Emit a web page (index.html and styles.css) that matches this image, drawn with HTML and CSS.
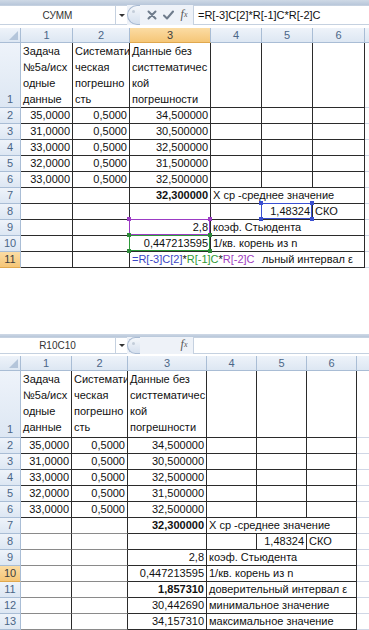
FILE: index.html
```html
<!DOCTYPE html>
<html lang="ru">
<head>
    <meta charset="UTF-8">
    <title>Задача 5а</title>
    <link rel="stylesheet" href="styles.css">
</head>
<body>
    <div class="sheet top">
        <div class="ribbon-edge"></div>
        <div class="fbar">
            <div class="namebox">СУММ</div>
            <div class="drop"><span class="tri"></span></div>
            <div class="cap"><span class="dot"></span></div>
            <div class="btn">
                <svg width="10" height="10" viewBox="0 0 10 10"><path d="M1.5 1.5 L8.5 8.5 M8.5 1.5 L1.5 8.5" stroke="#6f7c8c" stroke-width="2" stroke-linecap="round"/></svg>
            </div>
            <div class="btn">
                <svg width="11" height="10" viewBox="0 0 11 10"><path d="M1 5.5 L4 8.5 L10 1.5" fill="none" stroke="#6f7c8c" stroke-width="2" stroke-linecap="round" stroke-linejoin="round"/></svg>
            </div>
            <div class="btn fx">f<sub>x</sub></div>
            <div class="formula">=R[-3]C[2]*R[-1]C*R[-2]C</div>
        </div>

        <div class="grid grid-top">
            <div class="hd corner"><span class="corner-tri"></span></div>
            <div class="hd">1</div>
            <div class="hd">2</div>
            <div class="hd sel">3</div>
            <div class="hd">4</div>
            <div class="hd">5</div>
            <div class="hd">6</div>
            <div class="hd ex"></div>

            <div class="rh">1</div>
            <div class="c wrap">Задача<br>№5а/исх<br>одные<br>данные</div>
            <div class="c wrap">Системати<br>ческая<br>погрешно<br>сть</div>
            <div class="c wrap">Данные без<br>систтематичес<br>кой<br>погрешности</div>
            <div class="c"></div>
            <div class="c"></div>
            <div class="c"></div>
            <div class="c ex"></div>

            <div class="rh">2</div>
            <div class="c n">35,0000</div>
            <div class="c n">0,5000</div>
            <div class="c n">34,500000</div>
            <div class="c"></div><div class="c"></div><div class="c"></div>
            <div class="c ex"></div>

            <div class="rh">3</div>
            <div class="c n">31,0000</div>
            <div class="c n">0,5000</div>
            <div class="c n">30,500000</div>
            <div class="c"></div><div class="c"></div><div class="c"></div>
            <div class="c ex"></div>

            <div class="rh">4</div>
            <div class="c n">33,0000</div>
            <div class="c n">0,5000</div>
            <div class="c n">32,500000</div>
            <div class="c"></div><div class="c"></div><div class="c"></div>
            <div class="c ex"></div>

            <div class="rh">5</div>
            <div class="c n">32,0000</div>
            <div class="c n">0,5000</div>
            <div class="c n">31,500000</div>
            <div class="c"></div><div class="c"></div><div class="c"></div>
            <div class="c ex"></div>

            <div class="rh">6</div>
            <div class="c n">33,0000</div>
            <div class="c n">0,5000</div>
            <div class="c n">32,500000</div>
            <div class="c"></div><div class="c"></div><div class="c"></div>
            <div class="c ex"></div>

            <div class="rh">7</div>
            <div class="c"></div>
            <div class="c"></div>
            <div class="c n b">32,300000</div>
            <div class="c span3">Х ср -среднее значение</div>
            <div class="c ex"></div>

            <div class="rh">8</div>
            <div class="c"></div>
            <div class="c"></div>
            <div class="c"></div>
            <div class="c"></div>
            <div class="c n ov">1,48324
                <span class="ref blue"><i class="h tl"></i><i class="h tr"></i><i class="h bl"></i><i class="h br"></i></span>
            </div>
            <div class="c">СКО</div>
            <div class="c ex"></div>

            <div class="rh">9</div>
            <div class="c"></div>
            <div class="c"></div>
            <div class="c n ov">2,8
                <span class="ref purple"><i class="h tl"></i><i class="h tr"></i><i class="h bl"></i><i class="h br"></i></span>
            </div>
            <div class="c span3">коэф. Стьюдента</div>
            <div class="c ex"></div>

            <div class="rh">10</div>
            <div class="c"></div>
            <div class="c"></div>
            <div class="c n ov">0,447213595
                <span class="ref green"><i class="h tl"></i><i class="h tr"></i><i class="h bl"></i><i class="h br"></i></span>
            </div>
            <div class="c span3">1/кв. корень из n</div>
            <div class="c ex"></div>

            <div class="rh sel">11</div>
            <div class="c"></div>
            <div class="c"></div>
            <div class="c span4"><span class="edit"><span class="f-blue">=R[-3]C[2]</span>*<span class="f-green">R[-1]C</span>*<span class="f-purple">R[-2]C</span></span>льный интервал ε</div>
            <div class="c ex"></div>
        </div>
    </div>

    <div class="sheet bottom">
        <div class="ribbon-edge"></div>
        <div class="fbar">
            <div class="namebox">R10C10</div>
            <div class="drop"><span class="tri"></span></div>
            <div class="cap"><span class="dot"></span></div>
            <div class="btn"></div>
            <div class="btn"></div>
            <div class="btn fx">f<sub>x</sub></div>
            <div class="formula"></div>
        </div>

        <div class="grid grid-bottom">
            <div class="hd corner"><span class="corner-tri"></span></div>
            <div class="hd">1</div>
            <div class="hd">2</div>
            <div class="hd">3</div>
            <div class="hd">4</div>
            <div class="hd">5</div>
            <div class="hd">6</div>
            <div class="hd ex"></div>

            <div class="rh">1</div>
            <div class="c wrap">Задача<br>№5а/исх<br>одные<br>данные</div>
            <div class="c wrap">Системати<br>ческая<br>погрешно<br>сть</div>
            <div class="c wrap">Данные без<br>систтематичес<br>кой<br>погрешности</div>
            <div class="c"></div>
            <div class="c"></div>
            <div class="c"></div>
            <div class="c ex"></div>

            <div class="rh">2</div>
            <div class="c n">35,0000</div>
            <div class="c n">0,5000</div>
            <div class="c n">34,500000</div>
            <div class="c"></div><div class="c"></div><div class="c"></div>
            <div class="c ex"></div>

            <div class="rh">3</div>
            <div class="c n">31,0000</div>
            <div class="c n">0,5000</div>
            <div class="c n">30,500000</div>
            <div class="c"></div><div class="c"></div><div class="c"></div>
            <div class="c ex"></div>

            <div class="rh">4</div>
            <div class="c n">33,0000</div>
            <div class="c n">0,5000</div>
            <div class="c n">32,500000</div>
            <div class="c"></div><div class="c"></div><div class="c"></div>
            <div class="c ex"></div>

            <div class="rh">5</div>
            <div class="c n">32,0000</div>
            <div class="c n">0,5000</div>
            <div class="c n">31,500000</div>
            <div class="c"></div><div class="c"></div><div class="c"></div>
            <div class="c ex"></div>

            <div class="rh">6</div>
            <div class="c n">33,0000</div>
            <div class="c n">0,5000</div>
            <div class="c n">32,500000</div>
            <div class="c"></div><div class="c"></div><div class="c"></div>
            <div class="c ex"></div>

            <div class="rh">7</div>
            <div class="c lt"></div>
            <div class="c lt"></div>
            <div class="c n b">32,300000</div>
            <div class="c span3">Х ср -среднее значение</div>
            <div class="c ex"></div>

            <div class="rh">8</div>
            <div class="c lt"></div>
            <div class="c lt"></div>
            <div class="c"></div>
            <div class="c"></div>
            <div class="c n">1,48324</div>
            <div class="c">СКО</div>
            <div class="c ex"></div>

            <div class="rh">9</div>
            <div class="c lt"></div>
            <div class="c lt"></div>
            <div class="c n">2,8</div>
            <div class="c span3">коэф. Стьюдента</div>
            <div class="c ex"></div>

            <div class="rh sel">10</div>
            <div class="c lt"></div>
            <div class="c lt"></div>
            <div class="c n">0,447213595</div>
            <div class="c span3">1/кв. корень из n</div>
            <div class="c ex"></div>

            <div class="rh">11</div>
            <div class="c lt"></div>
            <div class="c lt"></div>
            <div class="c n b">1,857310</div>
            <div class="c span3">доверительный интервал ε</div>
            <div class="c ex"></div>

            <div class="rh">12</div>
            <div class="c lt"></div>
            <div class="c lt"></div>
            <div class="c n">30,442690</div>
            <div class="c span3">минимальное значение</div>
            <div class="c ex"></div>

            <div class="rh">13</div>
            <div class="c lt"></div>
            <div class="c lt"></div>
            <div class="c n">34,157310</div>
            <div class="c span3">максимальное значение</div>
            <div class="c ex"></div>

            <div class="rh"></div>
            <div class="c g"></div><div class="c g"></div><div class="c g"></div>
            <div class="c g"></div><div class="c g"></div><div class="c g"></div>
            <div class="c ex"></div>
        </div>
    </div>
</body>
</html>
```

FILE: styles.css
```css
body {
    margin: 0;
    background: #fff;
    font-family: 'Liberation Sans', Arial, sans-serif;
    font-size: 11px;
    color: #111;
}

.sheet {
    width: 369px;
    overflow: hidden;
}

.bottom {
    margin-top: 66px;
}

.ribbon-edge {
    height: 5px;
    background: linear-gradient(#cfd9e6, #b8c7da);
}

.bottom .ribbon-edge {
    height: 3px;
}

/* formula bar */
.fbar {
    display: flex;
    height: 20px;
    background: #eef2f8;
    margin-bottom: 3px;
}

.bottom .fbar {
    height: 17px;
    margin-bottom: 2px;
}

.namebox {
    box-sizing: border-box;
    width: 116px;
    background: #fff;
    border: 1px solid #c5d1e0;
    border-left: none;
    text-align: center;
    font-size: 10px;
    color: #333;
    display: flex;
    align-items: center;
    justify-content: center;
}

.drop {
    width: 11px;
    display: flex;
    align-items: center;
    justify-content: center;
    background: #fff;
    border-top: 1px solid #c5d1e0;
    border-bottom: 1px solid #c5d1e0;
    box-sizing: border-box;
}

.tri {
    width: 0;
    height: 0;
    border-left: 3px solid transparent;
    border-right: 3px solid transparent;
    border-top: 3px solid #333;
}

.cap {
    width: 13px;
    margin-right: 4px;
    box-sizing: border-box;
    border: 1px solid #a8bad2;
    border-right: none;
    border-radius: 10px 0 0 10px;
    background: linear-gradient(#f4f7fb, #d5e0ee);
    position: relative;
}

.dot {
    position: absolute;
    left: 4px;
    top: 4px;
    width: 3px;
    height: 3px;
    border-radius: 50%;
    background: #c3cdd9;
}

.btn {
    width: 16px;
    display: flex;
    align-items: center;
    justify-content: center;
}

.fx {
    font-family: 'Liberation Serif', serif;
    font-style: italic;
    font-size: 12px;
    color: #555;
    padding-bottom: 2px;
}

.fx sub {
    font-size: 8px;
}

.formula {
    flex: 1;
    margin-left: 1px;
    box-sizing: border-box;
    background: #fff;
    border: 1px solid #c5d1e0;
    border-right: none;
    padding-left: 4px;
    font-size: 11px;
    display: flex;
    align-items: center;
}

/* grid */
.grid {
    display: grid;
}

.grid-top {
    grid-template-columns: 21px 52px 57px 81px 51px 51px 52px 4px;
    grid-template-rows: 15px 65px repeat(10, 16px);
}

.grid-bottom {
    grid-template-columns: 21px 51px 56px 79px 50px 50px 50px 12px;
    grid-template-rows: 15px 67px repeat(13, 16px);
}

.hd, .rh {
    box-sizing: border-box;
    background: linear-gradient(#eef3fa, #dde7f3);
    color: #4b6687;
    border-right: 1px solid #a9bdd5;
    border-bottom: 1px solid #a9bdd5;
    display: flex;
    justify-content: center;
    align-items: center;
    font-size: 11px;
}

.rh {
    align-items: flex-end;
    line-height: 15px;
}

.hd.sel, .rh.sel {
    background: linear-gradient(#fbdca4, #f5c677);
    color: #3d3d3d;
    border-bottom-color: #e0a84e;
}

.corner {
    position: relative;
}

.corner-tri {
    position: absolute;
    right: 2px;
    bottom: 2px;
    width: 0;
    height: 0;
    border-left: 9px solid transparent;
    border-bottom: 9px solid #b4c5da;
}

.c {
    box-sizing: border-box;
    border-right: 1px solid #2b2b2b;
    border-bottom: 1px solid #2b2b2b;
    padding: 0 2px;
    display: flex;
    align-items: flex-end;
    white-space: nowrap;
    overflow: hidden;
    line-height: 15px;
    position: relative;
}

.c.n {
    justify-content: flex-end;
}

.c.b {
    font-weight: bold;
}

.c.wrap {
    display: block;
    white-space: normal;
    line-height: 16px;
}

.c.lt {
    border-bottom-color: #8a8a8a;
}

.c.g {
    border-right-color: #d0d7e5;
    border-bottom-color: #d0d7e5;
}

.c.ex, .hd.ex {
    border-right: none;
    border-bottom-color: #d0d7e5;
}

.hd.ex {
    border-bottom-color: #a9bdd5;
}

.span3 {
    grid-column: span 3;
}

.span4 {
    grid-column: span 4;
}

.c.ov {
    overflow: visible;
}

/* formula range highlights */
.ref {
    position: absolute;
    top: -1px;
    left: -1px;
    right: 0;
    bottom: 0;
    border: 1px solid;
    z-index: 2;
}

.ref.blue { border-color: #3a4fd0; }
.ref.purple { border-color: #9b3bc4; }
.ref.green { border-color: #2e9a3a; }

.h {
    position: absolute;
    width: 4px;
    height: 4px;
    background: currentColor;
}

.ref.blue .h { color: #3a4fd0; }
.ref.purple .h { color: #9b3bc4; }
.ref.green .h { color: #2e8a3a; }

.h.tl { left: -3px; top: -3px; }
.h.tr { right: -3px; top: -3px; }
.h.bl { left: -3px; bottom: -3px; }
.h.br { right: -3px; bottom: -3px; }

.edit {
    display: inline-block;
    width: 130px;
    background: #fff;
}

.f-blue { color: #3a46c4; }
.f-green { color: #2f9a36; }
.f-purple { color: #a03cc0; }
```
